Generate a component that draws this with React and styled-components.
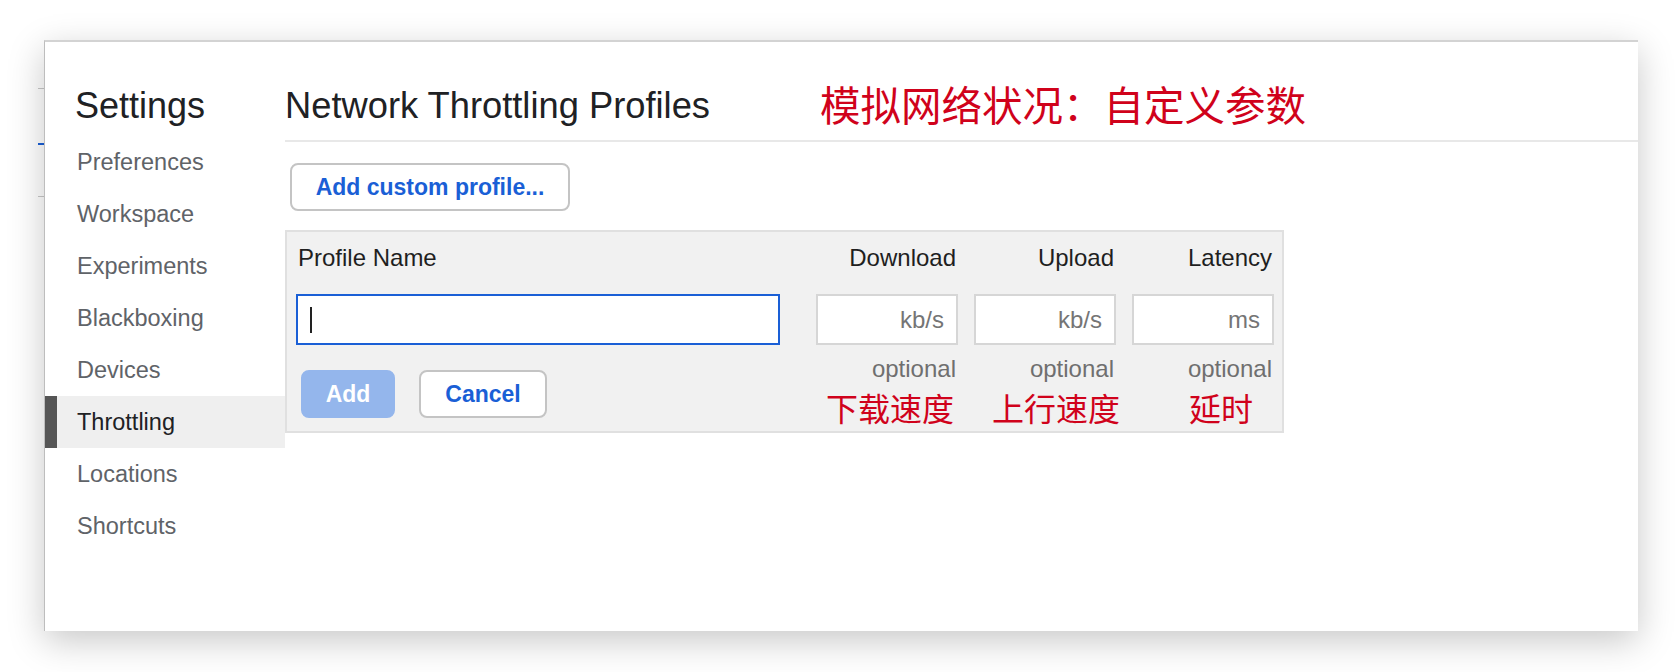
import React from "react";
import styled, { createGlobalStyle } from "styled-components";

const GlobalStyle = createGlobalStyle`
  html, body {
    margin: 0;
    padding: 0;
    background: #fff;
    font-family: "Liberation Sans", Arial, sans-serif;
  }
`;

const Page = styled.div`
  display: flex;
  width: 1678px;
  height: 672px;
  overflow: hidden;
`;

const BehindStrip = styled.div`
  width: 6px;
  margin-left: 38px;
  position: relative;
  z-index: 1;
`;

const BehindLine = styled.div`
  height: ${(p) => p.thick}px;
  background: ${(p) => p.color};
  margin-top: ${(p) => p.top}px;
`;

const Panel = styled.div`
  display: flex;
  width: 1594px;
  height: 591px;
  margin-top: 40px;
  background: #fff;
  border-top: 2px solid #d3d3d3;
  border-left: 1px solid #bdbdbd;
  box-sizing: border-box;
  box-shadow: 0 10px 34px rgba(0, 0, 0, 0.22);
  position: relative;
  z-index: 2;
`;

const Sidebar = styled.nav`
  width: 240px;
  padding-top: 42px;
  display: flex;
  flex-direction: column;
`;

const SidebarTitle = styled.h1`
  margin: 0 0 8px;
  padding-left: 30px;
  font-size: 36px;
  line-height: 44px;
  font-weight: 400;
  color: #202124;
`;

const NavItem = styled.div`
  height: 52px;
  line-height: 52px;
  font-size: 23.5px;
  padding-left: ${(p) => (p.active ? 20 : 32)}px;
  color: ${(p) => (p.active ? "#202124" : "#5f6368")};
  background: ${(p) => (p.active ? "#efefef" : "transparent")};
  border-left: ${(p) => (p.active ? "12px solid #555" : "none")};
`;

const Main = styled.main`
  flex: 1;
  display: flex;
  flex-direction: column;
  padding-top: 42px;
`;

const Header = styled.div`
  display: flex;
  align-items: flex-start;
  gap: 110px;
  padding-bottom: 12px;
  border-bottom: 2px solid #e8e8e8;
`;

const Title = styled.h2`
  margin: 0;
  font-size: 36.3px;
  line-height: 44px;
  font-weight: 400;
  color: #202124;
`;

const Annotation = styled.span`
  font-family: "Noto Sans CJK SC", sans-serif;
  font-size: ${(p) => p.size}px;
  line-height: ${(p) => p.lh}px;
  color: #d0021b;
  margin-top: ${(p) => p.drop || 0}px;
  margin-right: ${(p) => p.shift || 0}px;
`;

const Button = styled.button`
  box-sizing: border-box;
  height: 48px;
  padding: 0 23px;
  border-radius: 8px;
  border: 2px solid ${(p) => (p.primary ? "#94b6ec" : "#c4c4c4")};
  background: ${(p) => (p.primary ? "#94b6ec" : "#fff")};
  color: ${(p) => (p.primary ? "#fff" : "#1a5fd6")};
  font-family: "Liberation Sans", Arial, sans-serif;
  font-size: 23px;
  font-weight: 700;
  width: ${(p) => (p.w ? `${p.w}px` : "auto")};
`;

const FormButton = styled(Button)`
  padding: 0;
`;

const AddProfileButton = styled(Button)`
  align-self: flex-start;
  margin: 21px 0 0 5px;
  width: 280px;
`;

const Table = styled.div`
  margin-top: 19px;
  width: 999px;
  box-sizing: border-box;
  border: 2px solid #e0e0e0;
  background: #f1f1f1;
  padding: 12px 8px 7px 9px;
  display: grid;
  grid-template-columns: 484px 178px 158px 158px;
  grid-template-rows: 28px auto auto;
`;

const HeadCell = styled.div`
  font-size: 24px;
  line-height: 28px;
  color: #1f1f1f;
  padding: 0 ${(p) => (p.right ? 2 : 0)}px 0 ${(p) => (p.right ? 0 : 2)}px;
  text-align: ${(p) => (p.right ? "right" : "left")};
`;

const InputCell = styled.div`
  margin-top: 22px;
  display: flex;
  justify-content: ${(p) => (p.right ? "flex-end" : "flex-start")};
`;

const FakeInput = styled.div`
  box-sizing: border-box;
  width: ${(p) => p.w}px;
  height: 51px;
  background: #fff;
  border: 2px solid ${(p) => (p.focused ? "#1a5fd6" : "#d6d6d6")};
  display: flex;
  align-items: center;
  justify-content: ${(p) => (p.focused ? "flex-start" : "flex-end")};
  padding: 0 12px;
  font-size: 24px;
  line-height: 47px;
  color: #757575;
`;

const Caret = styled.span`
  width: 2px;
  height: 26px;
  background: #222;
`;

const ButtonsCell = styled.div`
  display: flex;
  gap: 24px;
  margin: 25px 0 0 5px;
  align-self: start;
`;

const NoteCell = styled.div`
  display: flex;
  flex-direction: column;
  align-items: flex-end;
  margin-top: 10px;
`;

const Optional = styled.span`
  font-size: 24px;
  line-height: 28px;
  color: #6f6f6f;
  margin-right: 2px;
  margin-bottom: 7px;
`;

const navItems = [
  "Preferences",
  "Workspace",
  "Experiments",
  "Blackboxing",
  "Devices",
  "Throttling",
  "Locations",
  "Shortcuts",
];

const columns = [
  { label: "Download", unit: "kb/s", note: "下载速度", w: 142, shift: 4 },
  { label: "Upload", unit: "kb/s", note: "上行速度", w: 142, shift: -4 },
  { label: "Latency", unit: "ms", note: "延时", w: 142, shift: 21 },
];

export default function App() {
  return (
    <>
      <GlobalStyle />
      <Page>
        <BehindStrip>
          <BehindLine top={88} thick={1} color="#c8c8c8" />
          <BehindLine top={54} thick={2} color="#1a5fd6" />
          <BehindLine top={51} thick={1} color="#c8c8c8" />
        </BehindStrip>
        <Panel>
          <Sidebar>
            <SidebarTitle>Settings</SidebarTitle>
            {navItems.map((item) => (
              <NavItem key={item} active={item === "Throttling"}>
                {item}
              </NavItem>
            ))}
          </Sidebar>
          <Main>
            <Header>
              <Title>Network Throttling Profiles</Title>
              <Annotation size={40.5} lh={34} drop={3}>
                模拟网络状况：自定义参数
              </Annotation>
            </Header>
            <AddProfileButton>Add custom profile...</AddProfileButton>
            <Table>
              <HeadCell>Profile Name</HeadCell>
              {columns.map((c) => (
                <HeadCell right key={c.label}>
                  {c.label}
                </HeadCell>
              ))}

              <InputCell>
                <FakeInput focused w={484}>
                  <Caret />
                </FakeInput>
              </InputCell>
              {columns.map((c) => (
                <InputCell right key={c.label}>
                  <FakeInput w={c.w}>{c.unit}</FakeInput>
                </InputCell>
              ))}

              <ButtonsCell>
                <FormButton primary w={94}>
                  Add
                </FormButton>
                <FormButton w={128}>Cancel</FormButton>
              </ButtonsCell>
              {columns.map((c) => (
                <NoteCell key={c.label}>
                  <Optional>optional</Optional>
                  <Annotation size={32} lh={34} shift={c.shift}>
                    {c.note}
                  </Annotation>
                </NoteCell>
              ))}
            </Table>
          </Main>
        </Panel>
      </Page>
    </>
  );
}
